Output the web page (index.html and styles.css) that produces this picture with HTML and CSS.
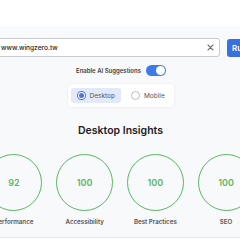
FILE: index.html
```html
<!DOCTYPE html>
<html lang="en">
<head>
    <meta charset="UTF-8">
    <meta name="viewport" content="width=device-width, initial-scale=1.0">
    <title>Desktop Insights</title>
    <link rel="stylesheet" href="styles.css">
</head>
<body>
    <header class="top-bar"></header>

    <main class="page">
        <div class="search-row">
            <div class="url-box">
                <span class="url-text">www.wingzero.tw</span>
                <svg class="clear-btn" width="7" height="7" viewBox="0 0 7 7">
                    <path d="M1 1 L6 6 M6 1 L1 6" stroke="#6f7378" stroke-width="1.1" stroke-linecap="round"/>
                </svg>
            </div>
            <button class="run-button">Run</button>
        </div>

        <div class="toggle-row">
            <span class="toggle-label">Enable AI Suggestions</span>
            <span class="switch"><span class="knob"></span></span>
        </div>

        <div class="device-picker">
            <div class="device-option active">
                <span class="radio"><span class="dot"></span></span>
                <span>Desktop</span>
            </div>
            <div class="device-option">
                <span class="radio"></span>
                <span>Mobile</span>
            </div>
        </div>

        <h1 class="insights-title">Desktop Insights</h1>

        <div class="scores">
            <div class="score">
                <div class="ring">92</div>
                <div class="score-label">Performance</div>
            </div>
            <div class="score">
                <div class="ring">100</div>
                <div class="score-label">Accessibility</div>
            </div>
            <div class="score">
                <div class="ring">100</div>
                <div class="score-label">Best Practices</div>
            </div>
            <div class="score">
                <div class="ring">100</div>
                <div class="score-label">SEO</div>
            </div>
        </div>
    </main>
</body>
</html>
```

FILE: styles.css
```css
body {
    margin: 0;
    width: 240px;
    height: 240px;
    overflow: hidden;
    font-family: Inter, "Liberation Sans", sans-serif;
    background-color: #ffffff;
    color: #333;
}

.top-bar {
    height: 26px;
    background: #ffffff;
}

.page {
    height: 212px;
    background-color: #f8f9fa;
    border-bottom: 1px solid #e6e8eb;
    padding-top: 12px;
    box-sizing: border-box;
    display: flex;
    flex-direction: column;
    align-items: center;
}

.search-row {
    display: flex;
    gap: 7px;
    width: 276px;
    margin-left: 2px;
    flex-shrink: 0;
}

.url-box {
    flex: 1;
    height: 19px;
    box-sizing: border-box;
    background: #fff;
    border: 1px solid #c9ccd1;
    border-radius: 3px;
    display: flex;
    align-items: center;
    justify-content: space-between;
    padding: 0 5px 0 17px;
}

.url-text {
    font-size: 6.6px;
    font-weight: 500;
    color: #222;
}

.run-button {
    width: 32px;
    height: 18px;
    margin-top: 1px;
    border: none;
    border-radius: 3px;
    background-color: #3b6fdc;
    color: #fff;
    font-family: inherit;
    font-size: 8px;
    font-weight: 600;
    padding: 0 0 0 5px;
    text-align: left;
}

.toggle-row {
    display: flex;
    align-items: center;
    gap: 5px;
    margin-top: 8px;
    margin-left: 2px;
}

.toggle-label {
    font-size: 6px;
    font-weight: 600;
    color: #444;
}

.switch {
    width: 20px;
    height: 11px;
    border-radius: 6px;
    background-color: #3d7be6;
    display: flex;
    align-items: center;
    justify-content: flex-end;
    padding: 0 1px;
    box-sizing: border-box;
}

.knob {
    width: 9px;
    height: 9px;
    border-radius: 50%;
    background: #fff;
}

.device-picker {
    display: flex;
    gap: 4px;
    width: 106px;
    height: 23px;
    box-sizing: border-box;
    margin-top: 8px;
    margin-left: 2px;
    padding: 4px 3px;
    background: #fff;
    border-radius: 4px;
    box-shadow: 0 0 3px rgba(0, 0, 0, 0.08);
}

.device-option {
    display: flex;
    align-items: center;
    gap: 4px;
    padding: 0 6px;
    font-size: 6.5px;
    color: #555;
    border-radius: 3px;
}

.device-option.active {
    background-color: #e2eafa;
    width: 50px;
    box-sizing: border-box;
}

.radio {
    width: 9px;
    height: 9px;
    box-sizing: border-box;
    border-radius: 50%;
    border: 1px solid #bbb;
    background: #fff;
    display: flex;
    align-items: center;
    justify-content: center;
}

.active .radio {
    border-color: #4a74d8;
}

.dot {
    width: 5px;
    height: 5px;
    border-radius: 50%;
    background-color: #4a74d8;
}

.insights-title {
    margin: 17px 0 0 1px;
    font-size: 10.5px;
    font-weight: 600;
    color: #222;
}

.scores {
    display: grid;
    grid-template-columns: repeat(4, 70.7px);
    margin-top: 17px;
    flex-shrink: 0;
}

.score {
    display: flex;
    flex-direction: column;
    align-items: center;
}

.ring {
    width: 57px;
    height: 57px;
    box-sizing: border-box;
    border: 1.6px solid #5cb764;
    border-radius: 50%;
    display: flex;
    align-items: center;
    justify-content: center;
    font-size: 9px;
    font-weight: 600;
    color: #5cb764;
}

.score-label {
    margin-top: 7px;
    font-size: 6.2px;
    font-weight: 600;
    color: #555;
}
```
